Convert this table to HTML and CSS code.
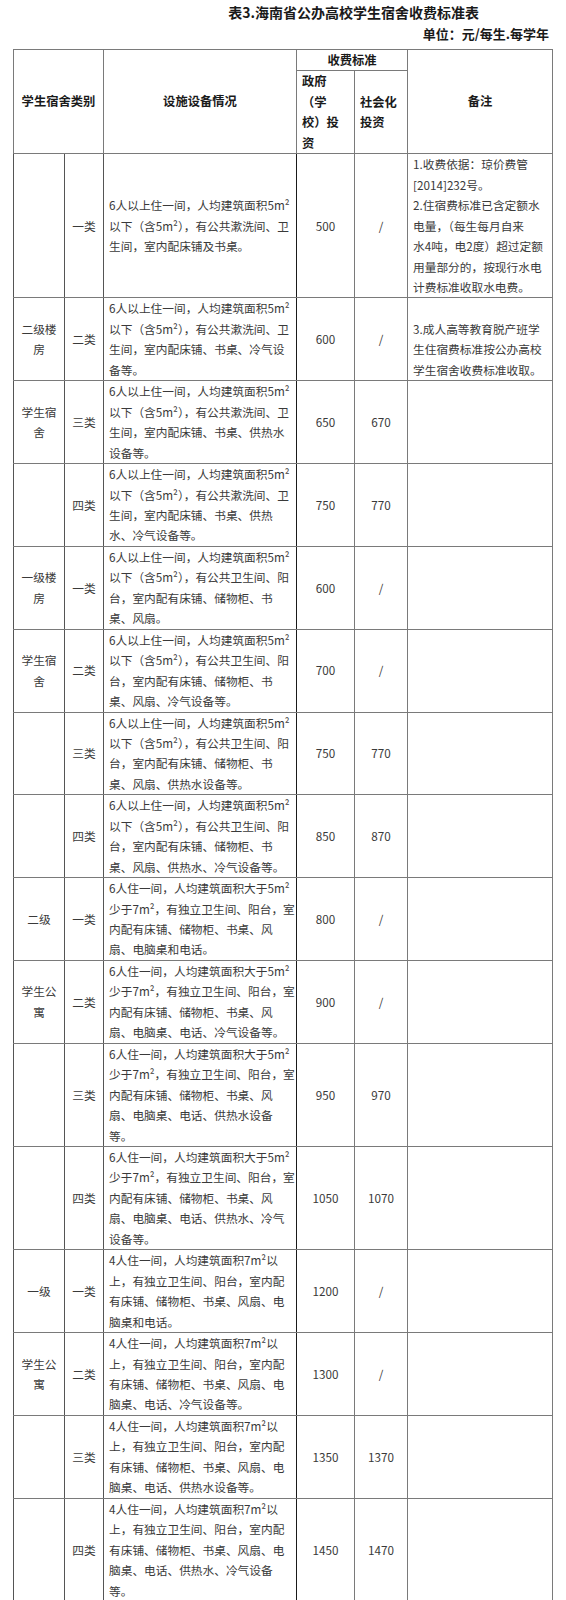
FILE: index.html
```html
<!DOCTYPE html>
<html lang="zh-CN">
<head>
<meta charset="utf-8">
<title>表3.海南省公办高校学生宿舍收费标准表</title>
<link rel="stylesheet" href="styles.css">
</head>
<body>
<div class="sheet">
  <h1 class="title">表3.海南省公办高校学生宿舍收费标准表</h1>
  <p class="unit">单位：元/每生.每学年</p>
  <table class="fees">
    <colgroup>
      <col class="c-type">
      <col class="c-class">
      <col class="c-desc">
      <col class="c-gov">
      <col class="c-soc">
      <col class="c-note">
    </colgroup>
    <thead>
      <tr>
        <th rowspan="2" colspan="2" class="h-center">学生宿舍类别</th>
        <th rowspan="2" class="h-center">设施设备情况</th>
        <th colspan="2" class="h-center">收费标准</th>
        <th rowspan="2" class="h-center">备注</th>
      </tr>
      <tr>
        <th class="h-left">政府<br>（学<br>校）投<br>资</th>
        <th class="h-left">社会化<br>投资</th>
      </tr>
    </thead>
    <tbody>
      <tr>
        <td class="type"></td>
        <td class="cls">一类</td>
        <td class="desc">6人以上住一间，人均建筑面积5m²<br>以下（含5m²），有公共漱洗间、卫<br>生间，室内配床铺及书桌。</td>
        <td class="num">500</td>
        <td class="num">/</td>
        <td class="note">1.收费依据：琼价费管<br>[2014]232号。<br>2.住宿费标准已含定额水<br>电量，（每生每月自来<br>水4吨，电2度）超过定额<br>用量部分的，按现行水电<br>计费标准收取水电费。</td>
      </tr>
      <tr>
        <td class="type">二级楼<br>房</td>
        <td class="cls">二类</td>
        <td class="desc">6人以上住一间，人均建筑面积5m²<br>以下（含5m²），有公共漱洗间、卫<br>生间，室内配床铺、书桌、冷气设<br>备等。</td>
        <td class="num">600</td>
        <td class="num">/</td>
        <td class="note note-low">3.成人高等教育脱产班学<br>生住宿费标准按公办高校<br>学生宿舍收费标准收取。</td>
      </tr>
      <tr>
        <td class="type">学生宿<br>舍</td>
        <td class="cls">三类</td>
        <td class="desc">6人以上住一间，人均建筑面积5m²<br>以下（含5m²），有公共漱洗间、卫<br>生间，室内配床铺、书桌、供热水<br>设备等。</td>
        <td class="num">650</td>
        <td class="num">670</td>
        <td class="note"></td>
      </tr>
      <tr>
        <td class="type"></td>
        <td class="cls">四类</td>
        <td class="desc">6人以上住一间，人均建筑面积5m²<br>以下（含5m²），有公共漱洗间、卫<br>生间，室内配床铺、书桌、供热<br>水、冷气设备等。</td>
        <td class="num">750</td>
        <td class="num">770</td>
        <td class="note"></td>
      </tr>
      <tr>
        <td class="type">一级楼<br>房</td>
        <td class="cls">一类</td>
        <td class="desc">6人以上住一间，人均建筑面积5m²<br>以下（含5m²），有公共卫生间、阳<br>台，室内配有床铺、储物柜、书<br>桌、风扇。</td>
        <td class="num">600</td>
        <td class="num">/</td>
        <td class="note"></td>
      </tr>
      <tr>
        <td class="type">学生宿<br>舍</td>
        <td class="cls">二类</td>
        <td class="desc">6人以上住一间，人均建筑面积5m²<br>以下（含5m²），有公共卫生间、阳<br>台，室内配有床铺、储物柜、书<br>桌、风扇、冷气设备等。</td>
        <td class="num">700</td>
        <td class="num">/</td>
        <td class="note"></td>
      </tr>
      <tr>
        <td class="type"></td>
        <td class="cls">三类</td>
        <td class="desc">6人以上住一间，人均建筑面积5m²<br>以下（含5m²），有公共卫生间、阳<br>台，室内配有床铺、储物柜、书<br>桌、风扇、供热水设备等。</td>
        <td class="num">750</td>
        <td class="num">770</td>
        <td class="note"></td>
      </tr>
      <tr>
        <td class="type"></td>
        <td class="cls">四类</td>
        <td class="desc">6人以上住一间，人均建筑面积5m²<br>以下（含5m²），有公共卫生间、阳<br>台，室内配有床铺、储物柜、书<br>桌、风扇、供热水、冷气设备等。</td>
        <td class="num">850</td>
        <td class="num">870</td>
        <td class="note"></td>
      </tr>
      <tr>
        <td class="type">二级</td>
        <td class="cls">一类</td>
        <td class="desc">6人住一间，人均建筑面积大于5m²<br>少于7m²，有独立卫生间、阳台，室<br>内配有床铺、储物柜、书桌、风<br>扇、电脑桌和电话。</td>
        <td class="num">800</td>
        <td class="num">/</td>
        <td class="note"></td>
      </tr>
      <tr>
        <td class="type">学生公<br>寓</td>
        <td class="cls">二类</td>
        <td class="desc">6人住一间，人均建筑面积大于5m²<br>少于7m²，有独立卫生间、阳台，室<br>内配有床铺、储物柜、书桌、风<br>扇、电脑桌、电话、冷气设备等。</td>
        <td class="num">900</td>
        <td class="num">/</td>
        <td class="note"></td>
      </tr>
      <tr>
        <td class="type"></td>
        <td class="cls">三类</td>
        <td class="desc">6人住一间，人均建筑面积大于5m²<br>少于7m²，有独立卫生间、阳台，室<br>内配有床铺、储物柜、书桌、风<br>扇、电脑桌、电话、供热水设备<br>等。</td>
        <td class="num">950</td>
        <td class="num">970</td>
        <td class="note"></td>
      </tr>
      <tr>
        <td class="type"></td>
        <td class="cls">四类</td>
        <td class="desc">6人住一间，人均建筑面积大于5m²<br>少于7m²，有独立卫生间、阳台，室<br>内配有床铺、储物柜、书桌、风<br>扇、电脑桌、电话、供热水、冷气<br>设备等。</td>
        <td class="num">1050</td>
        <td class="num">1070</td>
        <td class="note"></td>
      </tr>
      <tr>
        <td class="type">一级</td>
        <td class="cls">一类</td>
        <td class="desc">4人住一间，人均建筑面积7m²以<br>上，有独立卫生间、阳台，室内配<br>有床铺、储物柜、书桌、风扇、电<br>脑桌和电话。</td>
        <td class="num">1200</td>
        <td class="num">/</td>
        <td class="note"></td>
      </tr>
      <tr>
        <td class="type">学生公<br>寓</td>
        <td class="cls">二类</td>
        <td class="desc">4人住一间，人均建筑面积7m²以<br>上，有独立卫生间、阳台，室内配<br>有床铺、储物柜、书桌、风扇、电<br>脑桌、电话、冷气设备等。</td>
        <td class="num">1300</td>
        <td class="num">/</td>
        <td class="note"></td>
      </tr>
      <tr>
        <td class="type"></td>
        <td class="cls">三类</td>
        <td class="desc">4人住一间，人均建筑面积7m²以<br>上，有独立卫生间、阳台，室内配<br>有床铺、储物柜、书桌、风扇、电<br>脑桌、电话、供热水设备等。</td>
        <td class="num">1350</td>
        <td class="num">1370</td>
        <td class="note"></td>
      </tr>
      <tr>
        <td class="type"></td>
        <td class="cls">四类</td>
        <td class="desc">4人住一间，人均建筑面积7m²以<br>上，有独立卫生间、阳台，室内配<br>有床铺、储物柜、书桌、风扇、电<br>脑桌、电话、供热水、冷气设备<br>等。</td>
        <td class="num">1450</td>
        <td class="num">1470</td>
        <td class="note"></td>
      </tr>
    </tbody>
  </table>
</div>
</body>
</html>
```

FILE: styles.css
```css
html, body {
  margin: 0;
  padding: 0;
  background: #ffffff;
}

body {
  font-family: "Noto Sans CJK SC", "Noto Sans", sans-serif;
  color: #3a3a3a;
}

.sheet {
  margin-left: 13px;
  width: 539px;
}

.title {
  margin: 0;
  font-size: 14px;
  font-weight: bold;
  line-height: 24px;
  text-align: right;
  padding-right: 73px;
  color: #1a1a1a;
}

.unit {
  margin: 0;
  font-size: 13px;
  font-weight: bold;
  line-height: 20px;
  text-align: right;
  padding-right: 3px;
  color: #1a1a1a;
}

.fees {
  margin-top: 5px;
  border-collapse: collapse;
  table-layout: fixed;
  width: 539px;
}

.c-type { width: 51px; }
.c-class { width: 39px; }
.c-desc { width: 193px; }
.c-gov { width: 58px; }
.c-soc { width: 53px; }
.c-note { width: 145px; }

.fees th,
.fees td {
  border: 1px solid #7a7a7a;
  padding: 0 5px;
  line-height: 20.45px;
  vertical-align: middle;
  white-space: nowrap;
  overflow: hidden;
}

.fees th {
  font-size: 12.3px;
  font-weight: bold;
  color: #1a1a1a;
}

.fees td {
  font-size: 11.7px;
  font-weight: normal;
}

.fees .h-center { text-align: center; }
.fees .h-left { text-align: left; }

.fees .type,
.fees .cls {
  text-align: center;
  padding: 0;
  border-left-color: #555;
  border-right-color: #555;
}

.fees .desc {
  text-align: left;
  border-left-color: #555;
  border-right-color: #1a1a1a;
}

.fees .num {
  text-align: center;
}

.fees .note {
  text-align: left;
}

.fees .note-low {
  vertical-align: bottom;
}
```
